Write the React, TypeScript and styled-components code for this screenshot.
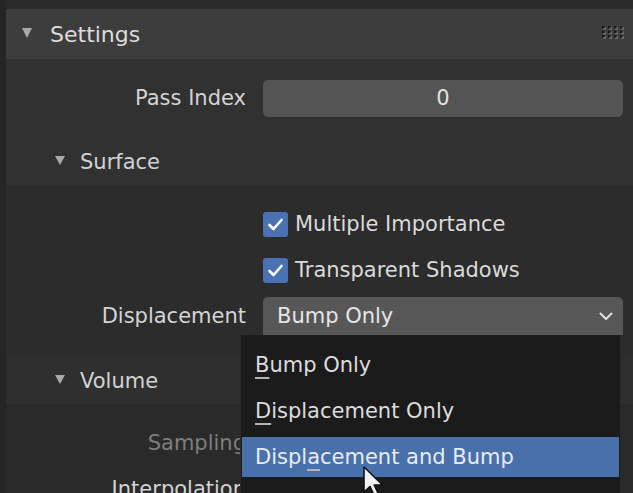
import React from "react";
import styled, { createGlobalStyle } from "styled-components";

const GlobalStyle = createGlobalStyle`
  html, body {
    margin: 0;
    padding: 0;
    background: #2a2a2a;
  }
  body {
    font-family: "DejaVu Sans", "Liberation Sans", sans-serif;
    color: #d6d6d6;
  }
`;

const menuItems = [
  { pre: "", key: "B", post: "ump Only" },
  { pre: "", key: "D", post: "isplacement Only" },
  { pre: "Displ", key: "a", post: "cement and Bump", active: true },
];

const Check = () => (
  <CheckBox>
    <svg width="17" height="15" viewBox="0 0 17 15">
      <path d="M2.5 8 L6.5 12 L14.5 3" fill="none" stroke="#fff" strokeWidth="2.6" strokeLinecap="round" strokeLinejoin="round" />
    </svg>
  </CheckBox>
);

const App = () => {
  return (
    <>
      <GlobalStyle />
      <Screen>
        <LeftEdge />
        <Editor>
          <PanelHeader>
            <Triangle $size={11} />
            <HeaderTitle>Settings</HeaderTitle>
            <Grip>
              <svg width="24" height="13" viewBox="0 0 24 13">
                {[0, 1, 2].map((r) =>
                  [0, 1, 2, 3].map((c) => (
                    <g key={`${r}-${c}`}>
                      <rect x={c * 6 + 1} y={r * 4.5 + 1} width="3" height="3" fill="#6a6a6a" />
                      <rect x={c * 6} y={r * 4.5} width="2.5" height="2.5" fill="#1a1a1a" />
                    </g>
                  ))
                )}
              </svg>
            </Grip>
          </PanelHeader>

          <PanelBody>
            <PropRow>
              <Label>Pass Index</Label>
              <NumberField>0</NumberField>
            </PropRow>
          </PanelBody>

          <SubHeader>
            <Triangle $size={10} />
            <SubTitle>Surface</SubTitle>
          </SubHeader>
          <SubBody>
            <PropRow>
              <span />
              <CheckRow>
                <Check />
                <CheckText>Multiple Importance</CheckText>
              </CheckRow>
            </PropRow>
            <PropRow>
              <span />
              <CheckRow>
                <Check />
                <CheckText>Transparent Shadows</CheckText>
              </CheckRow>
            </PropRow>
            <PropRow>
              <Label>Displacement</Label>
              <SelectField>
                <span>Bump Only</span>
                <svg width="14" height="9" viewBox="0 0 14 9">
                  <path d="M1.5 1.5 L7 7 L12.5 1.5" fill="none" stroke="#e0e0e0" strokeWidth="2" strokeLinecap="round" strokeLinejoin="round" />
                </svg>
              </SelectField>
            </PropRow>
          </SubBody>

          <SubHeader $dark>
            <Triangle $size={10} />
            <SubTitle>Volume</SubTitle>
          </SubHeader>
          <SubBody $dark>
            <PropRow>
              <Label $dim>Sampling</Label>
              <span />
            </PropRow>
            <PropRow>
              <Label>Interpolation</Label>
              <span />
            </PropRow>
          </SubBody>
        </Editor>

        <Menu>
          {menuItems.map((item, i) => (
            <MenuItem key={i} $active={!!item.active}>
              {item.pre}
              <Key>{item.key}</Key>
              {item.post}
            </MenuItem>
          ))}
        </Menu>

        <Cursor>
          <svg width="26" height="34" viewBox="0 0 26 34">
            <path
              d="M2 2 L2 27 L8 21.5 L12.5 31 L16.5 29.2 L12.2 20 L20.5 20 Z"
              fill="#f2f2f2"
              stroke="#111"
              strokeWidth="1.6"
              strokeLinejoin="round"
            />
          </svg>
        </Cursor>
      </Screen>
    </>
  );
};

export default App;

const Screen = styled.div`
  position: relative;
  width: 633px;
  height: 493px;
  overflow: hidden;
  display: flex;
  align-items: flex-start;
  background: #2a2a2a;
`;

const LeftEdge = styled.div`
  width: 6px;
  height: 100%;
  flex-shrink: 0;
  background: #252525;
`;

const Editor = styled.div`
  flex: 1;
  padding-top: 9px;
  background: #2a2a2a;
`;

const PanelHeader = styled.div`
  height: 50px;
  display: flex;
  align-items: center;
  gap: 18px;
  padding: 0 7px 0 16px;
  background: #3d3d3d;
`;

const Triangle = styled.div<{ $size: number }>`
  width: 0;
  height: 0;
  border-left: ${(p) => p.$size / 2}px solid transparent;
  border-right: ${(p) => p.$size / 2}px solid transparent;
  border-top: ${(p) => p.$size - 1}px solid #a9a9a9;
  margin-top: -2px;
`;

const HeaderTitle = styled.div`
  font-size: 22px;
  color: #dcdcdc;
  margin-top: 1px;
  flex: 1;
`;

const Grip = styled.div`
  display: flex;
  align-items: center;
  margin-top: -4px;
`;

const PanelBody = styled.div`
  background: #313131;
  padding: 20px 0 21px;
`;

const SubHeader = styled.div<{ $dark?: boolean }>`
  height: 47px;
  display: flex;
  align-items: center;
  gap: 15px;
  padding-left: 49px;
  background: ${(p) => (p.$dark ? "#2f2f2f" : "#313131")};
`;

const SubTitle = styled.div`
  font-size: 21px;
  color: #d2d2d2;
`;

const SubBody = styled.div<{ $dark?: boolean }>`
  display: flex;
  flex-direction: column;
  gap: 8px;
  padding: 20px 0 22px;
  background: ${(p) => (p.$dark ? "#2a2a2a" : "#2c2c2c")};
`;

const PropRow = styled.div`
  display: grid;
  grid-template-columns: 240px 1fr;
  column-gap: 17px;
  padding-right: 10px;
  height: 38px;
  align-items: center;
`;

const Label = styled.div<{ $dim?: boolean }>`
  text-align: right;
  font-size: 21px;
  color: ${(p) => (p.$dim ? "#7e7e7e" : "#d4d4d4")};
  white-space: nowrap;
`;

const NumberField = styled.div`
  height: 37px;
  border-radius: 5px;
  background: #545454;
  display: flex;
  align-items: center;
  justify-content: center;
  font-size: 21px;
  color: #e2e2e2;
`;

const SelectField = styled.div`
  height: 38px;
  border-radius: 5px 5px 0 0;
  background: #575757;
  display: flex;
  align-items: center;
  justify-content: space-between;
  padding: 0 10px 0 14px;
  font-size: 21px;
  color: #e6e6e6;
`;

const CheckRow = styled.div`
  display: flex;
  align-items: center;
  gap: 7px;
`;

const CheckBox = styled.div`
  width: 25px;
  height: 25px;
  border-radius: 3px;
  background: #4a72b2;
  display: flex;
  align-items: center;
  justify-content: center;
`;

const CheckText = styled.div`
  font-size: 21px;
  color: #dadada;
`;

const Menu = styled.div`
  position: absolute;
  left: 240px;
  top: 335px;
  width: 381px;
  height: 180px;
  box-sizing: border-box;
  background: #1b1b1b;
  border: 1px solid #2a2a2a;
  border-top: none;
  display: flex;
  flex-direction: column;
  gap: 6px;
  padding: 10px 1px 0;
`;

const MenuItem = styled.div<{ $active: boolean }>`
  height: 40px;
  display: flex;
  align-items: center;
  padding-left: 13px;
  font-size: 21px;
  color: ${(p) => (p.$active ? "#e8ecf4" : "#dcdcdc")};
  background: ${(p) => (p.$active ? "#4870ab" : "transparent")};
  white-space: pre;
`;

const Key = styled.span`
  text-decoration: underline;
  text-decoration-thickness: 2px;
  text-underline-offset: 5px;
  text-decoration-color: #b5b5b5;
`;

const Cursor = styled.div`
  position: absolute;
  left: 362px;
  top: 465px;
`;
